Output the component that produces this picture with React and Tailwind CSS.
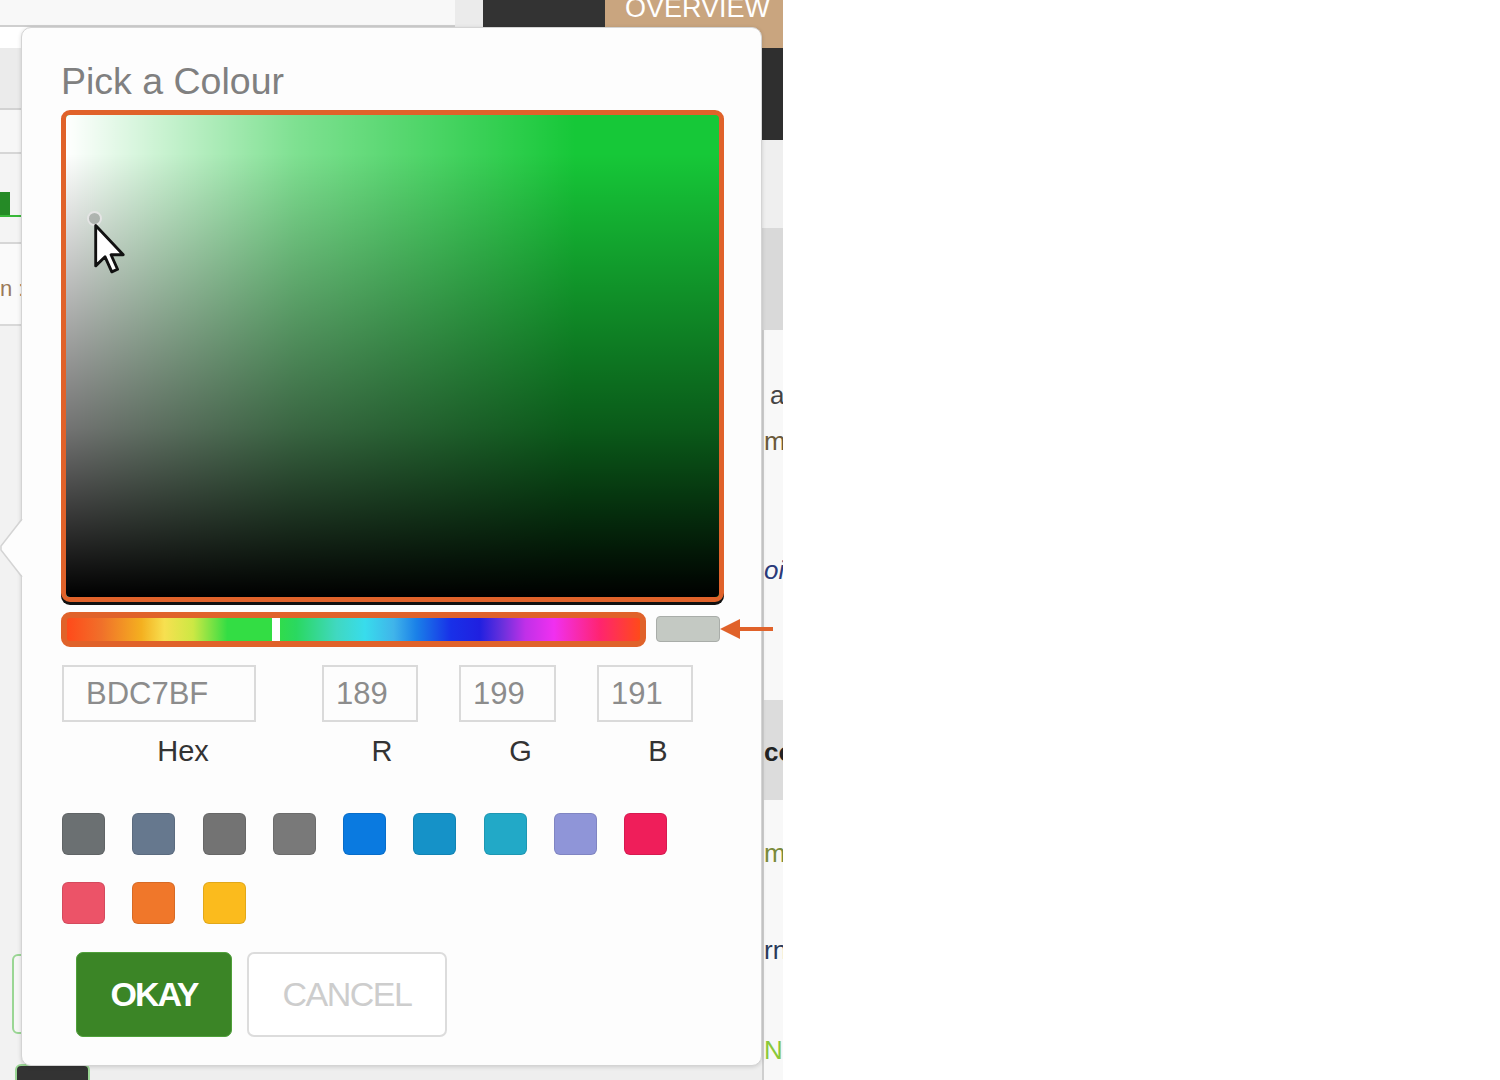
import React from "react";

const swatches = [
  "#6b7072",
  "#66788e",
  "#737373",
  "#797979",
  "#0a7ae0",
  "#1592c8",
  "#22a9c7",
  "#8f95d8",
  "#ef1e5a",
  "#ec5368",
  "#f0772a",
  "#fbbb1d",
];

function Cursor() {
  return (
    <svg width="34" height="52" viewBox="0 0 13 20" className="absolute left-[27px] top-[108px]">
      <path
        d="M1 1 L1 16.5 L4.6 13 L7.2 18.8 L9.4 17.8 L6.9 12.2 L11.6 12.2 Z"
        fill="#ffffff"
        stroke="#111111"
        strokeWidth="1.1"
        strokeLinejoin="round"
      />
    </svg>
  );
}

function ArrowPointer() {
  return (
    <svg width="54" height="26" viewBox="0 0 54 26" className="absolute left-[659px] top-[4px]">
      <polygon points="0,13 20,3 20,23" fill="#e0622a" />
      <rect x="18" y="11" width="35" height="4" fill="#e0622a" />
    </svg>
  );
}

function Background() {
  return (
    <div className="flex flex-col h-full">
      {/* top strip */}
      <div className="flex h-[48px] shrink-0">
        <div className="w-[455px] h-[27px] bg-[#f8f8f8] border-b-[2px] border-[#cfcfcf]" />
        <div className="w-[28px] h-[27px] bg-[#ebebeb]" />
        <div className="w-[122px] h-[27px] bg-[#333333]" />
        <div className="flex-1 bg-[#c9a57f] pl-[20px] overflow-hidden">
          <div className="-mt-[5px] text-[27px] leading-none text-white">OVERVIEW</div>
        </div>
      </div>
      <div className="flex flex-1">
        {/* left strip */}
        <div className="w-[21px] flex flex-col">
          <div className="h-[62px] bg-[#ebebeb] border-b-[2px] border-[#d2d2d2]" />
          <div className="h-[44px] bg-[#f7f7f7] border-b-[2px] border-[#d6d6d6]" />
          <div className="h-[90px] bg-[#f4f4f4] border-b-[2px] border-[#d6d6d6] flex flex-col">
            <div className="mt-[38px] w-[10px] h-[23px] bg-[#258a26]" />
            <div className="h-[2px] bg-[#38b838]" />
          </div>
          <div className="h-[82px] bg-[#fafafa] border-b-[2px] border-[#d8d8d8] text-[22px] leading-none text-[#9a7a5a] pt-[34px] whitespace-nowrap overflow-hidden">n :</div>
          <div className="flex-1 bg-[#f2f2f2] flex flex-col">
            <div className="mt-[628px] ml-[12px] h-[80px] w-[30px] rounded-l-[6px] border-[2px] border-[#9ad694] bg-[#f6f6f6] flex justify-end">
              <div className="w-[3px] mr-[9px] my-[6px] bg-[#2f2f2f]" />
            </div>
            <div className="relative z-10 mt-[30px] ml-[15px] h-[30px] w-[75px] rounded-t-[6px] border-[2px] border-[#9ad694] bg-[#333]" />
          </div>
        </div>
        <div className="flex-1 bg-[#eeeeee]" />
        {/* right strip */}
        <div className="w-[21px] flex flex-col overflow-hidden text-[26px] leading-none whitespace-nowrap">
          <div className="h-[92px] bg-[#2f2f2f]" />
          <div className="h-[88px] bg-[#efefef]" />
          <div className="h-[102px] bg-[#d9d9d9]" />
          <div className="h-[370px] bg-[#f8f8f8] border-l-[2px] border-[#cfcfcf] flex flex-col">
            <div className="mt-[52px] pl-[6px] text-[#444]">a</div>
            <div className="mt-[20px] text-[#6a5a3a]">m</div>
            <div className="mt-[103px] italic text-[#2a3a7a]">oi</div>
          </div>
          <div className="h-[100px] bg-[#dcdcdc] border-l-[2px] border-[#cfcfcf] pt-[39px] font-bold text-[#222]">co</div>
          <div className="flex-1 bg-[#f8f8f8] border-l-[2px] border-[#cfcfcf] flex flex-col">
            <div className="mt-[40px] text-[#7a8a3a]">m</div>
            <div className="mt-[71px] text-[#2a3a5a]">rn</div>
            <div className="mt-[74px] text-[#8ac83a]">N</div>
          </div>
        </div>
      </div>
    </div>
  );
}

export default function App() {
  return (
    <div className="w-[1500px] h-[1080px] bg-white flex font-['Liberation_Sans',Arial,sans-serif]">
      <div className="relative w-[783px] h-[1080px] overflow-hidden">
        <Background />

        {/* colour picker popover */}
        <div className="absolute z-20 left-[21px] top-[27px] w-[741px] h-[1039px] bg-[#fdfdfd] border border-[#d4d4d4] rounded-[10px] shadow-[0_1px_4px_rgba(0,0,0,0.15)] pl-[39px] pt-[35px] flex flex-col">
          <svg width="23" height="58" viewBox="0 0 23 58" className="absolute left-[-22px] top-[491px]">
            <polygon points="23,0 1,27 1,31 23,58" fill="#fdfdfd" />
            <polyline points="22,0 1,27 1,31 22,58" fill="none" stroke="#d4d4d4" strokeWidth="1.5" />
          </svg>

          <h2 className="text-[37.5px] leading-none text-[#808080] font-normal">Pick a Colour</h2>

          {/* saturation / value area */}
          <div className="relative mt-[9px] w-[663px] h-[492px] rounded-[9px] border-[5px] border-[#e0622a] bg-[#16c838] overflow-hidden shadow-[0_3px_0_#111]">
            <div className="absolute inset-0 bg-[linear-gradient(to_right,#ffffff_0%,rgba(255,255,255,0.45)_35%,rgba(255,255,255,0)_78%)]" />
            <div className="absolute inset-0 bg-[linear-gradient(to_top,#000000_0%,rgba(0,0,0,0.55)_35%,rgba(0,0,0,0)_92%)]" />
            <div className="absolute left-[21px] top-[96px] w-[15px] h-[15px] rounded-full border-[2px] border-[#e4e4e4] bg-[rgba(140,140,140,0.5)]" />
            <Cursor />
          </div>

          {/* hue row */}
          <div className="relative mt-[10px] flex items-center">
            <div className="relative w-[585px] h-[35px] rounded-[9px] border-[6px] border-[#e0622a] bg-[linear-gradient(to_right,#ff4a1a_0%,#f0702a_6%,#f4b020_13%,#f7e050_17%,#cce844_22%,#33dd44_28%,#33dd44_36%,#2ad860_40%,#40d8c0_47%,#38dcec_52%,#40b4ea_57%,#1a80e8_61%,#1830e8_67%,#2020e0_72%,#6a30dc_76%,#c030e8_80%,#f030f0_85%,#ff2470_93%,#ff4a1a_100%)]">
              <div className="absolute left-[205px] top-0 bottom-0 w-[8px] bg-white" />
            </div>
            <div className="ml-[10px] w-[64px] h-[26px] rounded-[4px] bg-[#c4c9c3] border border-[#a9ada9]" />
            <ArrowPointer />
          </div>

          {/* hex / rgb inputs */}
          <div className="mt-[18px] ml-[1px] flex items-start text-[29px] leading-none text-[#333]">
            <div className="flex flex-col w-[194px]">
              <div className="h-[57px] border-[2px] border-[#dadada] flex items-center pl-[22px] text-[31px] text-[#8c8c8c]">BDC7BF</div>
              <div className="mt-[15px] pl-[48px] text-center">Hex</div>
            </div>
            <div className="flex flex-col w-[96px] ml-[66px]">
              <div className="h-[57px] border-[2px] border-[#dadada] flex items-center pl-[12px] text-[31px] text-[#8c8c8c]">189</div>
              <div className="mt-[15px] pl-[24px] text-center">R</div>
            </div>
            <div className="flex flex-col w-[97px] ml-[41px]">
              <div className="h-[57px] border-[2px] border-[#dadada] flex items-center pl-[12px] text-[31px] text-[#8c8c8c]">199</div>
              <div className="mt-[15px] pl-[26px] text-center">G</div>
            </div>
            <div className="flex flex-col w-[96px] ml-[41px]">
              <div className="h-[57px] border-[2px] border-[#dadada] flex items-center pl-[12px] text-[31px] text-[#8c8c8c]">191</div>
              <div className="mt-[15px] pl-[26px] text-center">B</div>
            </div>
          </div>

          {/* preset swatches */}
          <div className="mt-[47px] ml-[1px] grid grid-cols-[repeat(9,43px)] gap-x-[27.3px] gap-y-[27px] w-[612px]">
            {swatches.map((c) => (
              <div
                key={c}
                className="w-[43px] h-[42px] rounded-[6px] border border-black/10"
                style={{ backgroundColor: c }}
              />
            ))}
          </div>

          {/* actions */}
          <div className="mt-[28px] ml-[15px] flex gap-[15px]">
            <button className="w-[156px] h-[85px] rounded-[7px] bg-[#3b8526] border border-[#4fa03a] text-white text-[34px] font-bold tracking-[-2px]">
              OKAY
            </button>
            <button className="w-[200px] h-[85px] rounded-[7px] bg-white border-[2px] border-[#dcdcdc] text-[#cdcdcd] text-[34px] tracking-[-1.5px]">
              CANCEL
            </button>
          </div>
        </div>
      </div>
    </div>
  );
}
